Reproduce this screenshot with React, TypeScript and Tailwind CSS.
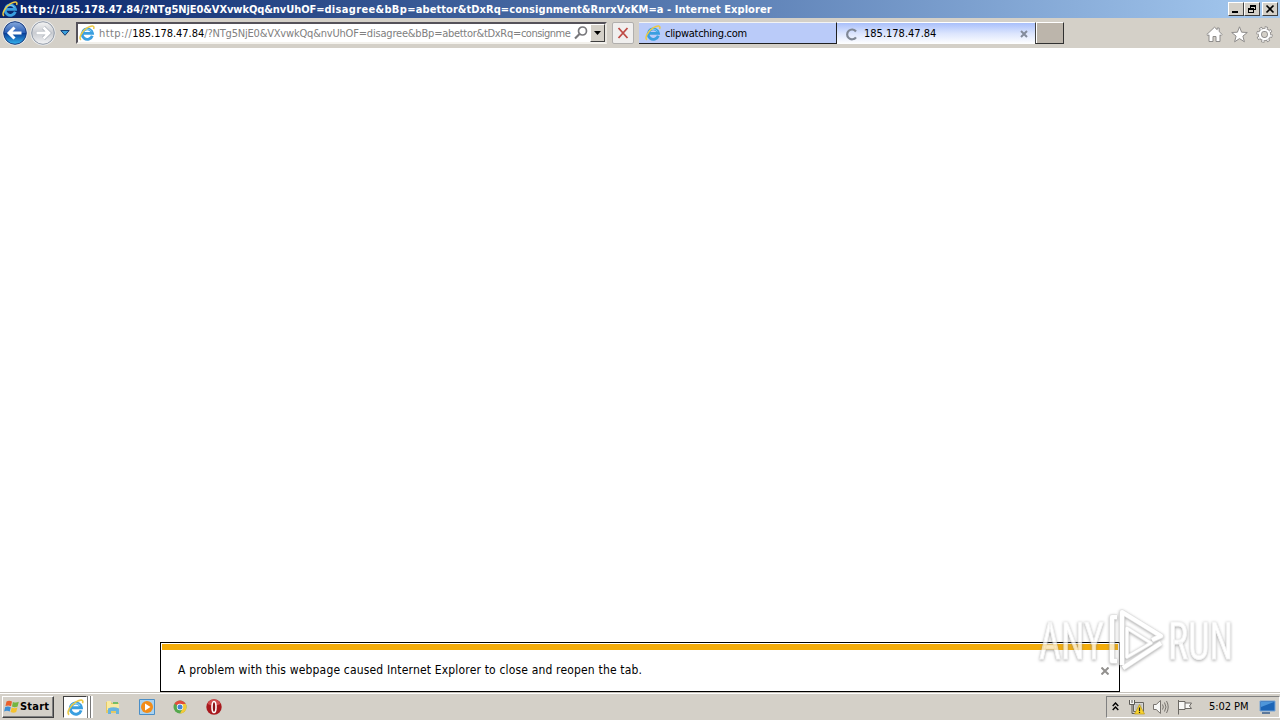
import type { ReactNode } from "react";

function IE({ className = "" }: { className?: string }) {
  return (
    <svg viewBox="0 0 16 16" className={"shrink-0 " + className}>
      <path d="M13.300 10.700A5.200 5.200 0 1 1 13.500 8.300H4.200" fill="none" stroke="#3a9fe0" strokeWidth="2.800" />
      <path d="M3.600 6.500C5.300 3.500 11 3.500 12.200 6.500" fill="none" stroke="#8ad6f7" strokeWidth="1" />
      <path d="M2 14.800C-.8 13 3 6 8.500 2.700C12.500.3 16 .3 14.600 4" fill="none" stroke="#ecc945" strokeWidth="1.500" />
    </svg>
  );
}

function CaptionButton({ children }: { children: ReactNode }) {
  return (
    <div className="h-[14px] w-4 border border-t-white border-l-white border-r-[#404040] border-b-[#404040] bg-[#d4d0c8]">
      <svg viewBox="0 0 14 12" className="h-3 w-[14px]" fill="none" stroke="#000" shapeRendering="crispEdges">{children}</svg>
    </div>
  );
}

function TitleBar() {
  return (
    <div className="flex h-[18px] items-center bg-linear-to-r from-[#0a246a] to-[#a6caf0] pl-[2px] pr-[2px]">
      <IE className="h-4 w-4" />
      <span className="ml-[2px] grow pt-px text-[11px] leading-[17px] font-bold tracking-[0.06px] whitespace-pre text-white">
        <span className="tracking-[0.65px]">http://</span>185.178.47.84<span className="tracking-[-0.07px]">/?NTg5NjE0&amp;VXvwkQq&amp;nvUhOF=</span><span className="tracking-[0.33px]">disagree&amp;bBp=</span>abettor&amp;tDxRq=consignment&amp;RnrxVxKM=a - Internet Explorer
      </span>
      <CaptionButton><path d="M3 9h6" strokeWidth="2" /></CaptionButton>
      <CaptionButton>
        <path d="M5 2h6M5 3h6M5.500 2v3M10.500 2v5M8 6.500h3" />
        <path d="M3 5h6M3 6h6M3.500 5v5M8.500 5v5M3 9.500h6" />
      </CaptionButton>
      <div className="w-[2px]" />
      <CaptionButton><path d="M3.500 2.500l7 7M10.500 2.500l-7 7" strokeWidth="1.700" shapeRendering="auto" /></CaptionButton>
    </div>
  );
}

function NavArrow({ back }: { back?: boolean }) {
  return (
    <svg viewBox="0 0 26 26" className="h-[26px] w-[26px] shrink-0">
      <defs>
        <linearGradient id="navBlue" x1="0" y1="0" x2="0" y2="1">
          <stop offset="0" stopColor="#86a9dd" />
          <stop offset=".48" stopColor="#2a5fb6" />
          <stop offset=".52" stopColor="#08409a" />
          <stop offset="1" stopColor="#35b5f0" />
        </linearGradient>
        <linearGradient id="navGrey" x1="0" y1="0" x2="0" y2="1">
          <stop offset="0" stopColor="#f4f4f4" />
          <stop offset=".5" stopColor="#c9ccd1" />
          <stop offset="1" stopColor="#f4f5f7" />
        </linearGradient>
      </defs>
      <circle cx="13" cy="13" r="12.500" fill="#eef0f2" />
      <circle cx="13" cy="13" r="11.300" fill={back ? "url(#navBlue)" : "url(#navGrey)"} stroke={back ? "#173a7c" : "#8f98a5"} />
      <path d={back ? "M19.500 13H8M12.500 7.500L7 13l5.500 5.500" : "M6.500 13H18M13.500 7.500L19 13l-5.500 5.500"} fill="none" stroke={back ? "#fff" : "#a5acb5"} strokeWidth={back ? 3 : 4} />
      {!back && <path d="M6.500 13H18M13.500 7.500L19 13l-5.500 5.500" fill="none" stroke="#fff" strokeWidth="2.800" />}
    </svg>
  );
}

function AddressBar() {
  return (
    <div className="flex h-[22px] w-[531px] items-center border-2 border-t-[#55525a] border-l-[#55525a] border-r-[#e8e5df] border-b-[#f3f1ec] bg-white pl-px">
      <IE className="h-4 w-4" />
      <div className="ml-[4px] w-[474px] pt-[2px] text-[11px] leading-4 tracking-[-0.19px] whitespace-nowrap text-[#808080]">
        <span className="tracking-[0.42px]">http://</span><span className="tracking-[-0.03px] text-black">185.178.47.84</span>/?NTg5NjE0&amp;VXvwkQq&amp;nvUhOF=disagree&amp;bBp=<span className="tracking-[-0.3px]">abettor&amp;tDxRq=</span><span className="tracking-[-0.5px]">consignme</span>
      </div>
      <svg viewBox="0 0 16 16" className="h-4 w-4 shrink-0" fill="none" stroke="#77777b" strokeWidth="1.700">
        <circle cx="9.500" cy="6" r="4" />
        <path d="M6.500 9L2 13.500" strokeWidth="2.200" />
      </svg>
      <div className="ml-px flex h-[18px] w-[15px] shrink-0 items-center justify-center border border-t-white border-l-white border-r-[#404040] border-b-[#404040] bg-[#d4d0c8]">
        <svg viewBox="0 0 7 4" className="h-1 w-[7px]"><path d="M0 0h7L3.500 4z" /></svg>
      </div>
    </div>
  );
}

function Toolbar() {
  return (
    <div className="flex h-[30px] items-center bg-[#d4d0c8] pl-[2px]">
      <NavArrow back />
      <div className="ml-[2px] flex"><NavArrow /></div>
      <svg viewBox="0 0 10 6" className="ml-1 h-[6px] w-[10px]"><path d="M.8.500h8.400L5 5.300z" fill="#3aa0dc" stroke="#143c72" /></svg>
      <div className="ml-[6px]"><AddressBar /></div>
      <div className="ml-[5px] flex h-[22px] w-[22px] items-center justify-center rounded-[2px] border border-[#b1afad] bg-[#f0efee]">
        <svg viewBox="0 0 12 12" className="h-3 w-3"><path d="M1.500 1l9 10M10.500 1l-9 10" stroke="#bf4b45" strokeWidth="1.800" /></svg>
      </div>
      <div className="ml-[5px] flex h-[22px] w-[198px] items-center border-t border-r border-b border-t-[#f3f3f3] border-r-[#202020] border-b-[#202020] bg-[#bacbf9] pl-[6px]">
        <IE className="h-4 w-4" />
        <span className="ml-[4px] pt-[2px] text-[11px] leading-4 tracking-[-0.3px] whitespace-nowrap">clipwatching.com</span>
      </div>
      <div className="flex h-[22px] w-[198px] items-center border-t border-t-white bg-linear-to-b from-[#a9bffa] via-[#dce5fd] to-white pl-2">
        <svg viewBox="0 0 14 14" className="h-[14px] w-[14px]"><path d="M11 4.500A4.900 4.900 0 1 0 11 10.300" fill="none" stroke="#7f8795" strokeWidth="2.200" /></svg>
        <span className="ml-[5px] grow pt-px text-[11px] leading-4 whitespace-nowrap">185.178.47.84</span>
        <svg viewBox="0 0 8 8" className="mr-[7px] h-2 w-2"><path d="M1 1l6 6M7 1l-6 6" stroke="#838b9b" strokeWidth="2" /></svg>
      </div>
      <div className="h-[22px] w-[29px] border border-t-white border-l-[#404040] border-r-[#303030] border-b-[#303030] bg-[#bcb5ab] shadow-[inset_1px_0_0_#fff]" />
      <div className="ml-auto flex gap-2 pr-[7px] pt-[3px]">
        <svg viewBox="0 0 17 17" className="h-[17px] w-[17px]" fill="#fff" stroke="#8e8c8b"><path d="M.8 8.500L8.500 1.200l2.700 2.500V2h2v3.600l3 2.900-1.200 1.200-1-.9v6.700H10v-5H7v5H3V8.800l-1 .9z" /></svg>
        <svg viewBox="0 0 17 17" className="h-[17px] w-[17px]" fill="#fff" stroke="#8e8c8b"><path d="M8.500.8l2.100 5.400 5.700.3-4.400 3.600 1.500 5.700-4.900-3.200-4.900 3.200 1.500-5.700L.7 6.500l5.700-.3z" /></svg>
        <svg viewBox="0 0 17 17" className="h-[17px] w-[17px]">
          <g fill="none" stroke="#8e8c8b"><circle cx="8.500" cy="8.500" r="6.600" strokeWidth="3.200" strokeDasharray="2.900 2.284" /><circle cx="8.500" cy="8.500" r="4.500" strokeWidth="4.200" /></g>
          <g fill="none" stroke="#fff"><circle cx="8.500" cy="8.500" r="6.600" strokeWidth="1.600" strokeDasharray="1.700 3.484" strokeDashoffset="-.6" /><circle cx="8.500" cy="8.500" r="4.600" strokeWidth="2.400" /></g>
          <circle cx="8.500" cy="8.500" r="2.400" fill="#d4d0c8" />
        </svg>
      </div>
    </div>
  );
}

function Taskbar() {
  return (
    <div className="flex h-7 items-center border-t border-t-[#c5c1ba] bg-[#d4d0c8] pt-px shadow-[inset_0_1px_0_#fff]">
      <div className="ml-[2px] flex h-[22px] w-[52px] items-center border border-t-white border-l-white border-r-[#404040] border-b-[#404040] pl-px shadow-[inset_-1px_-1px_0_#808080]">
        <svg viewBox="0 0 16 16" className="h-4 w-4 shrink-0">
          <path d="M2.500 2.500Q5 .8 8 2.500L7 7.200Q4.500 5.800 1.500 7z" fill="#e9602c" />
          <path d="M8.900 2.900Q12 4 14.800 2.800L13.600 7.500Q11 8.800 8 7.600z" fill="#74b642" />
          <path d="M1.200 8Q4 6.700 6.800 8.200L5.700 12.500Q3 11 .1 12.500z" fill="#3c8fd6" />
          <path d="M7.700 8.600Q10.500 9.800 13.400 8.600L12.200 13Q9.500 14.300 6.600 13z" fill="#f5c22e" />
        </svg>
        <span className="pt-px text-[11px] font-bold tracking-[0.2px]">Start</span>
      </div>
      <div className="ml-[9px] flex h-[22px]">
        <div className="flex w-[24px] items-center justify-center border border-t-[#404040] border-l-[#404040] border-r-white border-b-white bg-white"><IE className="h-[17px] w-[17px]" /></div>
        <div className="w-px bg-[#777]" /><div className="w-[2px] bg-white" /><div className="w-px bg-[#777]" /><div className="w-[2px] bg-white" />
      </div>
      <svg viewBox="0 0 16 16" className="ml-[12px] h-4 w-4">
        <path d="M1 3h5l1 1h7v10H1z" fill="#e5c964" /><path d="M2 2h4v3h8v6H2z" fill="#f8eaa2" /><path d="M8 3h5v2H8z" fill="#74bd68" />
        <path d="M3 15V9.500Q8.500 7 14 9.500V15h-3v-3H6v3z" fill="#68b4df" />
      </svg>
      <svg viewBox="0 0 16 16" className="ml-[18px] h-4 w-4">
        <path d="M.5.500h15v15H.5z" fill="#a9d2f0" stroke="#4a8ec7" /><circle cx="8" cy="8" r="6" fill="#f28c18" /><path d="M6 4.500L11.500 8 6 11.500z" fill="#fff" />
      </svg>
      <svg viewBox="0 0 16 16" className="ml-[17px] h-4 w-4">
        <circle cx="8" cy="8" r="6.500" fill="#55a84d" /><path d="M8 8L2.400 4.800A6.500 6.500 0 0 1 13.600 4.800z" fill="#e34b3c" />
        <path d="M8 5h5.800A6.500 6.500 0 0 1 8 14.500L10.600 9.500z" fill="#f4c938" /><circle cx="8" cy="8" r="3.200" fill="#fff" /><circle cx="8" cy="8" r="2.500" fill="#4286d4" />
      </svg>
      <svg viewBox="0 0 16 16" className="ml-[18px] h-4 w-4">
        <circle cx="8" cy="8" r="7.700" fill="#a8191e" /><path d="M1.500 5a7 7 0 0 1 13 0Q8 8 1.500 5z" fill="#d24c4d" /><ellipse cx="8" cy="8" rx="2" ry="5.500" fill="#8d1418" stroke="#fff" strokeWidth="1.600" />
      </svg>
      <div className="ml-auto flex h-[22px] w-[174px] items-center border border-t-[#808080] border-l-[#808080] border-r-white border-b-white pl-[5px]">
        <svg viewBox="0 0 7 9" className="mb-[2px] h-[9px] w-[7px]" fill="none" stroke="#000" strokeWidth="1.400"><path d="M.7 4L3.500 1l2.800 3M.7 8l2.800-3 2.800 3" /></svg>
        <svg viewBox="0 0 18 16" className="ml-[9px] h-4 w-[18px]">
          <path d="M5.500 3.500h10v9h-10z" fill="#d7d7d5" stroke="#66645f" /><path d="M7 5h7v6H7z" fill="#c2c1bd" />
          <path d="M1.500 1v4.500h5V1z" fill="#f4f4f2" /><path d="M1.500 1v4.500h5V1M4 1v3M4 5.500v9h4" fill="none" stroke="#5c5a56" />
          <path d="M11.500 5.500l5 9.500h-10z" fill="#f9d32d" stroke="#b8981c" strokeWidth=".7" /><path d="M11.500 8.500v3.500M11.500 12.800v1.200" stroke="#222" strokeWidth="1.200" />
        </svg>
        <svg viewBox="0 0 17 16" className="ml-[6px] h-4 w-[17px]" fill="none" stroke="#77736e"><path d="M1.500 5.500h2.700L8.500 1.500v13L4.200 10.500H1.500z" fill="#f7f7f5" /><path d="M10.500 5.500q1.700 2.500 0 5M12.500 3.500q3 4.500 0 9M14.500 2q3.400 6 0 12" /></svg>
        <svg viewBox="0 0 17 16" className="ml-[7px] h-4 w-[17px]" fill="#f8f8f6" stroke="#6c6964"><path d="M2.500 1v14.500M3 2.500h6v8H3M9 4h6.500l-2 3 2 2.500H9" /></svg>
        <span className="ml-[16px] pt-px text-[11px] tracking-[-0.05px] whitespace-nowrap">5:02 PM</span>
        <svg viewBox="0 0 17 16" className="ml-auto mr-[3px] h-4 w-[17px] shrink-0"><path d="M1 2h15v10H1z" fill="#1c65b7" stroke="#79a6d6" /><path d="M2 3h13L2 8z" fill="#4e96da" /><path d="M3 14h8" stroke="#365c8c" strokeWidth="1.500" /></svg>
      </div>
    </div>
  );
}

function Watermark() {
  return (
    <svg viewBox="0 0 230 100" className="pointer-events-none absolute top-[600px] left-[1020px] h-[100px] w-[230px] overflow-visible" fontFamily="Roboto, sans-serif">
      <g opacity=".72" style={{ filter: "drop-shadow(0 1px 1.500px #888)" }}>
        <g fill="#fff" stroke="#f0f0f0" strokeWidth="1" fontSize="51">
          <text x="19" y="59" textLength="65" lengthAdjust="spacingAndGlyphs">ANY</text>
          <text x="148" y="59" textLength="65" lengthAdjust="spacingAndGlyphs">RUN</text>
        </g>
        <g fill="none" strokeLinejoin="round">
          <path d="M97 17H92V61H97M102 65V12L141 36L132 40M141 43L103 68" stroke="#d9d9d9" strokeWidth="5.500" />
          <path d="M97 17H92V61H97M102 65V12L141 36L132 40M141 43L103 68" stroke="#fff" strokeWidth="4" />
          <path d="M107 28L131 43L107 57z" stroke="#ddd" strokeWidth="4" />
          <path d="M107 28L131 43L107 57z" stroke="#fff" strokeWidth="2.600" />
        </g>
      </g>
    </svg>
  );
}

export default function App() {
  return (
    <div className="relative flex h-[720px] w-[1280px] flex-col overflow-hidden bg-white font-['DejaVu_Sans_Condensed','DejaVu_Sans',sans-serif] text-black [font-stretch:condensed]">
      <TitleBar />
      <Toolbar />
      <main className="flex grow items-end justify-center">
        <div className="flex h-[50px] w-[960px] flex-col border border-black bg-white p-px">
          <div className="h-[6px] bg-[#f3ac0a]" />
          <div className="flex grow items-center justify-between pr-[9px] pl-[16px]">
            <span className="mt-[-1px] text-[12px] tracking-[0.17px] whitespace-nowrap">A problem with this webpage caused Internet Explorer to close and reopen the tab.</span>
            <svg viewBox="0 0 8 8" className="mt-[2px] h-2 w-2"><path d="M.5.500l7 7M7.500.500l-7 7" stroke="#92908e" strokeWidth="2" /></svg>
          </div>
        </div>
      </main>
      <Taskbar />
      <Watermark />
    </div>
  );
}
